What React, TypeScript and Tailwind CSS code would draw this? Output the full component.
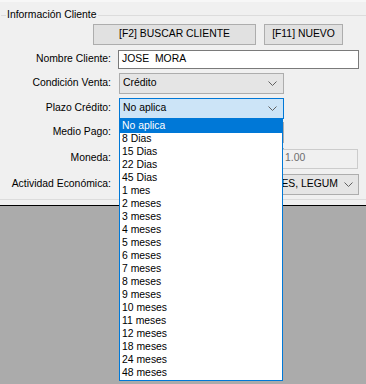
import React from "react";

const plazos = [
  "No aplica",
  "8 Dias",
  "15 Dias",
  "22 Dias",
  "45 Dias",
  "1 mes",
  "2 meses",
  "3 meses",
  "4 meses",
  "5 meses",
  "6 meses",
  "7 meses",
  "8 meses",
  "9 meses",
  "10 meses",
  "11 meses",
  "12 meses",
  "18 meses",
  "24 meses",
  "48 meses",
];

function Chevron() {
  return (
    <svg width="9" height="5" viewBox="0 0 9 5" className="shrink-0">
      <polyline points="0.5,0.5 4.5,4.5 8.5,0.5" fill="none" stroke="#606060" strokeWidth="1" />
    </svg>
  );
}

function Label({ children }: { children: React.ReactNode }) {
  return <div className="w-[111px] shrink-0 text-right text-black">{children}</div>;
}

function Combo({ text, active }: { text?: string; active?: boolean }) {
  return (
    <div
      className={
        "ml-[8px] w-[165px] h-[21px] flex items-center pl-[3px] pr-[6px] border " +
        (active ? "bg-[#cce4f7] border-[#0078d7]" : "bg-[#e5e5e5] border-[#adadad]")
      }
    >
      <div className="flex-1 overflow-hidden whitespace-nowrap">{text}</div>
      <Chevron />
    </div>
  );
}

export default function App() {
  return (
    <div
      className="w-[366px] h-[384px] bg-[#f0f0f0] overflow-hidden flex flex-col text-[10.4px] leading-none"
      style={{ fontFamily: '"Liberation Sans", Arial, sans-serif' }}
    >
      <div className="h-[205px] shrink-0 border-t-2 border-t-[#f7f7f7] flex flex-col">
        {/* group title */}
        <div className="mt-[7px] h-[12px] flex items-center">
          <div className="w-[5px] ml-[1px] h-px bg-[#dcdcdc]" />
          <span className="px-[1px] text-black">Información Cliente</span>
          <div className="flex-1 h-px bg-[#dcdcdc]" />
        </div>

        {/* buttons */}
        <div className="mt-[3px] flex pl-[93px] gap-[8px]">
          <button className="w-[163px] h-[21px] bg-[#e1e1e1] border border-[#adadad] text-black flex items-center justify-center">
            [F2] BUSCAR CLIENTE
          </button>
          <button className="w-[79px] h-[21px] bg-[#e1e1e1] border border-[#adadad] text-black flex items-center justify-center">
            [F11] NUEVO
          </button>
        </div>

        {/* nombre */}
        <div className="mt-[5px] flex items-center">
          <Label>Nombre Cliente:</Label>
          <div className="ml-[7px] w-[241px] h-[19px] bg-white border border-[#7a7a7a] flex items-center pl-[3px] whitespace-pre text-black">
            JOSE  MORA
          </div>
        </div>

        {/* condicion */}
        <div className="mt-[4px] flex items-center">
          <Label>Condición Venta:</Label>
          <Combo text="Crédito" />
        </div>

        {/* plazo */}
        <div className="mt-[4px] flex items-center relative">
          <Label>Plazo Crédito:</Label>
          <Combo text="No aplica" active />
          <div className="absolute left-[119px] top-[21px] w-[164px] bg-white border border-[#0078d7] z-10 flex flex-col">
            {plazos.map((p, i) => (
              <div
                key={p}
                className={
                  "h-[13px] pl-[2px] flex items-center whitespace-nowrap " +
                  (i === 0 ? "bg-[#0078d7] text-white" : "text-black")
                }
              >
                {p}
              </div>
            ))}
          </div>
        </div>

        {/* medio pago (covered by the open list) */}
        <div className="mt-[3px] flex items-center">
          <Label>Medio Pago:</Label>
          <Combo />
        </div>

        {/* moneda */}
        <div className="mt-[5px] flex items-center">
          <Label>Moneda:</Label>
          <Combo />
          <div className="ml-[-3px] w-[77px] h-[20px] border border-[#cccccc] bg-[#f0f0f0] flex items-center pl-[3px] text-[#6d6d6d]">
            1.00
          </div>
        </div>

        {/* actividad */}
        <div className="mt-[5px] flex items-center">
          <Label>Actividad Económica:</Label>
          <div className="ml-[8px] w-[240px] h-[21px] flex items-center pr-[5px] border bg-[#e5e5e5] border-[#adadad]">
            <div className="flex-1 whitespace-nowrap flex justify-end pr-[6px]">
              <span>ES, LEGUM</span>
            </div>
            <Chevron />
          </div>
        </div>

        <div className="mt-[4px] h-px bg-[#dcdcdc]" />
      </div>
      <div className="flex-1 bg-[#ababab] border-t border-black" />
    </div>
  );
}
